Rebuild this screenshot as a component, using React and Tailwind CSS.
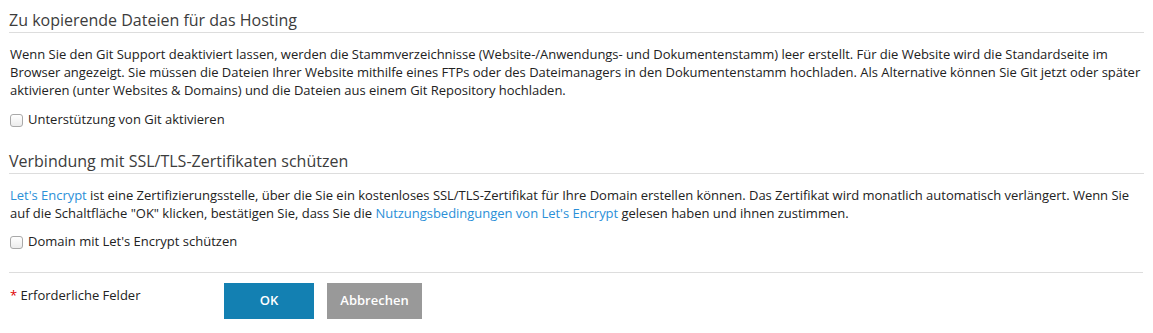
import React from 'react';

function Checkbox({ label }) {
  return (
    <label className="flex items-center h-[18px] gap-[5px] text-[13px] text-[#222]">
      <span className="w-[13px] h-[13px] rounded-[3px] border border-[#a9a9a9] bg-gradient-to-b from-white to-[#ececec] flex-shrink-0" />
      <span>{label}</span>
    </label>
  );
}

function SectionTitle({ children, className = '' }) {
  return (
    <h2 className={`text-[16px] leading-[24px] text-[#3c3c3c] border-b border-[#dddddd] h-[25px] ${className}`}>
      {children}
    </h2>
  );
}

export default function App() {
  return (
    <div
      className="w-[1153px] h-[333px] bg-white pl-[9px] pr-[9px] pt-[8px]"
      style={{ fontFamily: '"Open Sans", "Liberation Sans", sans-serif' }}
    >
      {/* Files */}
      <SectionTitle>Zu kopierende Dateien für das Hosting</SectionTitle>
      <p className="mt-[12px] pl-[1px] text-[13px] leading-[18px] tracking-[-0.02px] text-[#222]">
        Wenn Sie den Git Support deaktiviert lassen, werden die Stammverzeichnisse (Website-/Anwendungs- und Dokumentenstamm) leer erstellt. Für die Website wird die Standardseite im Browser angezeigt. Sie müssen die Dateien Ihrer Website mithilfe eines FTPs oder des Dateimanagers in den Dokumentenstamm hochladen. Als Alternative können Sie Git jetzt oder später aktivieren (unter Websites &amp; Domains) und die Dateien aus einem Git Repository hochladen.
      </p>
      <div className="mt-[12px] pl-[1px]">
        <Checkbox label="Unterstützung von Git aktivieren" />
      </div>

      {/* SSL */}
      <SectionTitle className="mt-[20px]">Verbindung mit SSL/TLS-Zertifikaten schützen</SectionTitle>
      <p className="mt-[12px] pl-[1px] text-[13px] leading-[18px] tracking-[-0.02px] text-[#222]">
        <a className="text-[#2b8fd8]">Let's Encrypt</a> ist eine Zertifizierungsstelle, über die Sie ein kostenloses SSL/TLS-Zertifikat für Ihre Domain erstellen können. Das Zertifikat wird monatlich automatisch verlängert. Wenn Sie auf die Schaltfläche "OK" klicken, bestätigen Sie, dass Sie die{' '}
        <a className="text-[#2b8fd8]">Nutzungsbedingungen von Let's Encrypt</a> gelesen haben und ihnen zustimmen.
      </p>
      <div className="mt-[11px] pl-[1px]">
        <Checkbox label="Domain mit Let's Encrypt schützen" />
      </div>

      {/* Footer */}
      <div className="mt-[21px] mr-[1px] border-t border-[#dddddd]" />
      <div className="mt-[10px] flex">
        <div className="w-[215px] pl-[1px] pt-[3px] text-[13px] leading-[18px] text-[#222]">
          <span className="text-[#e00000]">*</span> Erforderliche Felder
        </div>
        <div className="flex gap-[13px]">
          <button className="w-[90px] h-[36px] bg-[#1380b2] text-white text-[13px] font-semibold">OK</button>
          <button className="w-[95px] h-[36px] bg-[#999999] text-white text-[13px] font-semibold">Abbrechen</button>
        </div>
      </div>
    </div>
  );
}
